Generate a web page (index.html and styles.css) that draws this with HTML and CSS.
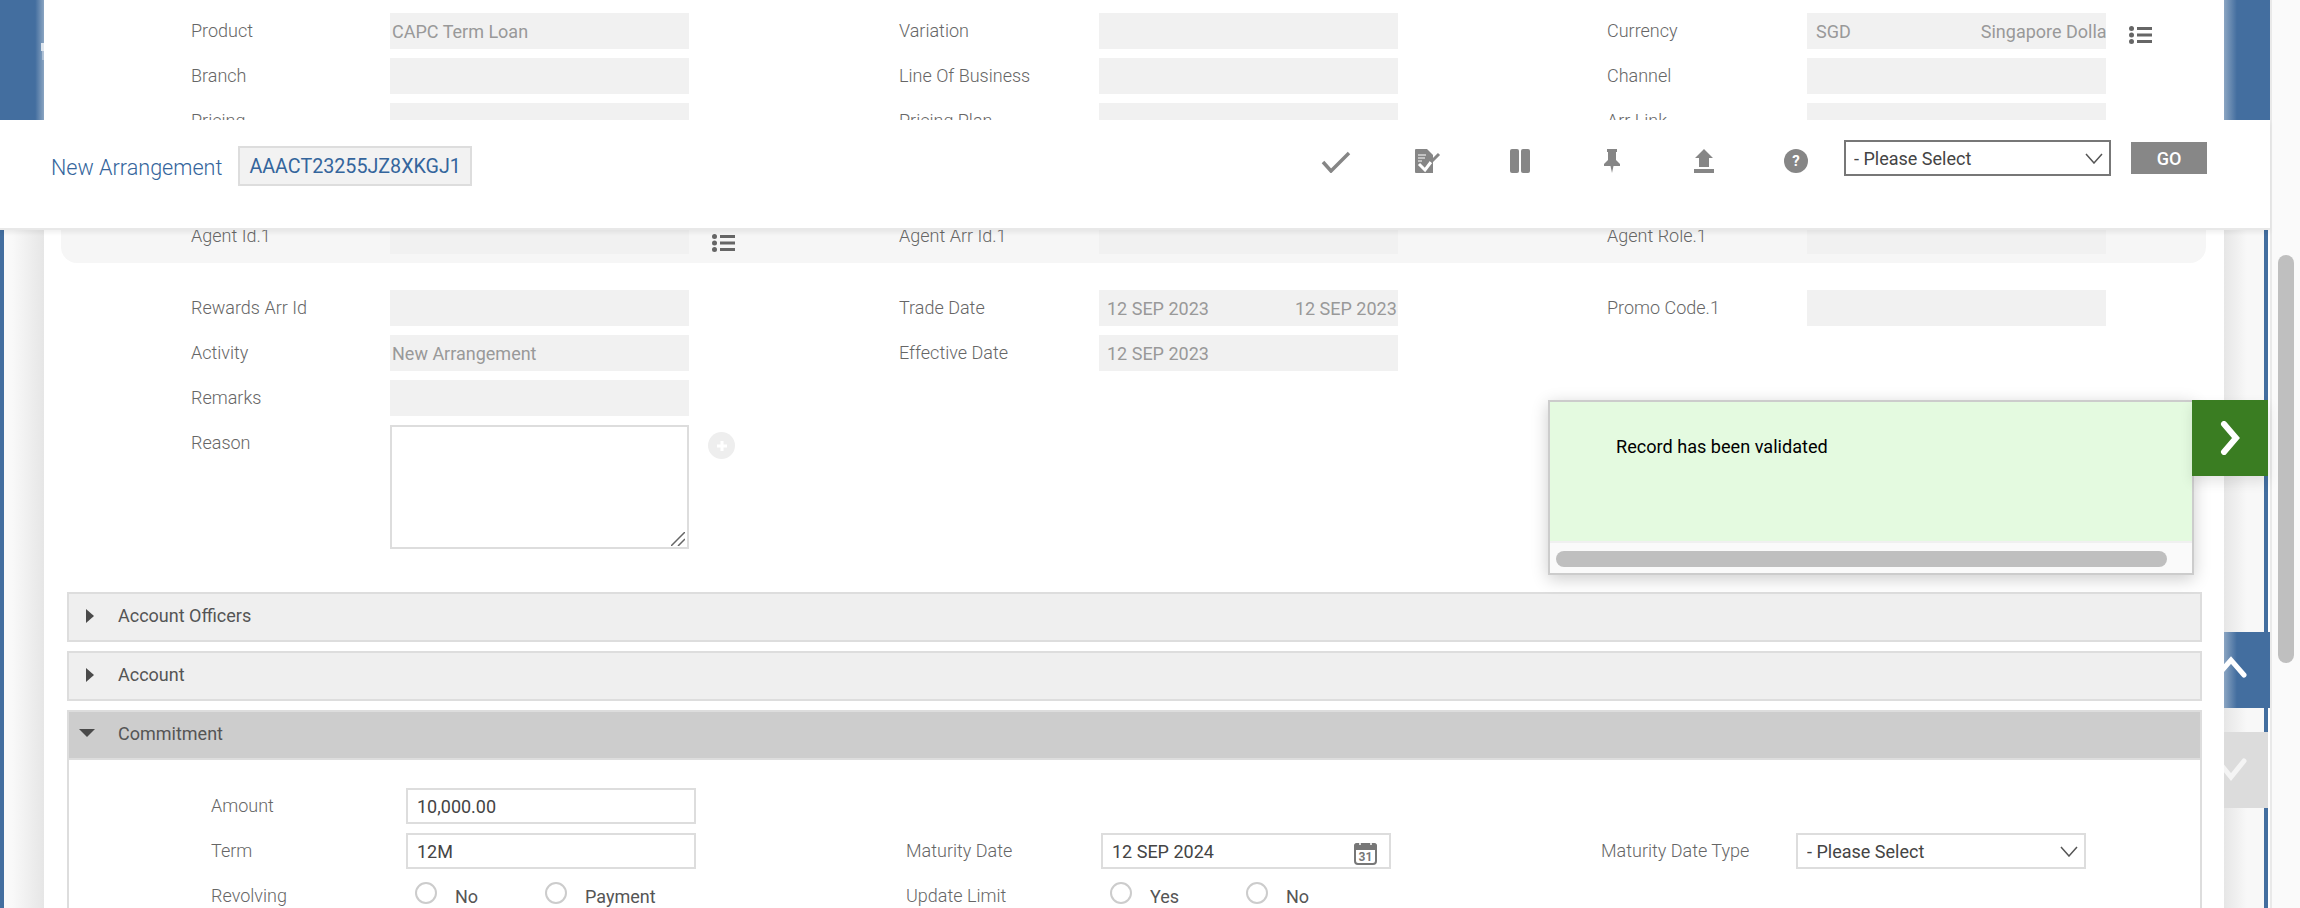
FILE: index.html
```html
<!DOCTYPE html>
<html lang="en">
<head>
    <meta charset="UTF-8">
    <title>New Arrangement</title>
    <link rel="stylesheet" href="styles.css">
</head>
<body>
    <div class="page">
        <!-- Left gutter -->
        <div class="gutter gutter-left">
            <div class="stub stub-left">
                <svg class="stub-arrow" width="3" height="17" viewBox="0 0 3 17"><rect width="3" height="8" fill="#fff" opacity="0.75"/><rect x="1" y="8" width="2" height="9" fill="#fff" opacity="0.35"/></svg>
            </div>
        </div>

        <div class="main">
            <div class="form-grid">
                <div class="field"><label>Product</label><div class="box tight">CAPC Term Loan</div></div>
                <div class="field"><label>Variation</label><div class="box"></div></div>
                <div class="field">
                    <label>Currency</label>
                    <div class="box split"><span>SGD</span><span class="second">Singapore Dollar</span></div>
                    <svg class="list-icon" width="23" height="18" viewBox="0 0 23 18"><use href="#list"/></svg>
                </div>
                <div class="field"><label>Branch</label><div class="box"></div></div>
                <div class="field"><label>Line Of Business</label><div class="box"></div></div>
                <div class="field"><label>Channel</label><div class="box"></div></div>
                <div class="field"><label>Pricing</label><div class="box"></div></div>
                <div class="field"><label>Pricing Plan</label><div class="box"></div></div>
                <div class="field"><label>Arr Link</label><div class="box"></div></div>
            </div>

            <div class="agent-panel">
                <div class="form-grid">
                    <div class="field">
                        <label>Agent Id.1</label><div class="box"></div>
                        <svg class="list-icon low" width="23" height="18" viewBox="0 0 23 18"><use href="#list"/></svg>
                    </div>
                    <div class="field"><label>Agent Arr Id.1</label><div class="box"></div></div>
                    <div class="field"><label>Agent Role.1</label><div class="box"></div></div>
                </div>
            </div>

            <div class="form-grid">
                <div class="field"><label>Rewards Arr Id</label><div class="box"></div></div>
                <div class="field">
                    <label>Trade Date</label>
                    <div class="box dates"><span>12 SEP 2023</span><span class="second">12 SEP 2023</span></div>
                </div>
                <div class="field"><label>Promo Code.1</label><div class="box"></div></div>
                <div class="field"><label>Activity</label><div class="box tight">New Arrangement</div></div>
                <div class="field"><label>Effective Date</label><div class="box">12 SEP 2023</div></div>
                <div class="field"></div>
                <div class="field"><label>Remarks</label><div class="box"></div></div>
                <div class="field"></div>
                <div class="field"></div>
                <div class="field field-tall">
                    <label>Reason</label>
                    <div class="reason-wrap">
                        <textarea class="reason"></textarea>
                        <svg class="grip" width="14" height="14" viewBox="0 0 14 14"><path d="M0 14L14 0M7 14l7-7" stroke="#666" stroke-width="1.500"/></svg>
                    </div>
                    <span class="add-btn">
                        <svg width="14" height="14" viewBox="0 0 14 14"><path d="M7 2v10M2 7h10" stroke="#fff" stroke-width="3"/></svg>
                    </span>
                </div>
            </div>

            <!-- Accordion sections -->
            <div class="section">
                <div class="section-head"><span class="tri-right"></span>Account Officers</div>
            </div>
            <div class="section">
                <div class="section-head"><span class="tri-right"></span>Account</div>
            </div>
            <div class="section open">
                <div class="section-head"><span class="tri-down"></span>Commitment</div>
                <div class="section-body">
                    <div class="inner-grid">
                        <div class="field"><label>Amount</label><input class="entry" type="text" value="10,000.00"></div>
                        <div class="field"></div>
                        <div class="field"></div>

                        <div class="field"><label>Term</label><input class="entry" type="text" value="12M"></div>
                        <div class="field">
                            <label>Maturity Date</label>
                            <div class="date-wrap">
                                <input class="entry" type="text" value="12 SEP 2024">
                                <svg class="cal-icon" width="23" height="24" viewBox="0 0 23 24">
                                    <path d="M3 2h17a3 3 0 0 1 3 3v4H0V5a3 3 0 0 1 3-3z" fill="#777"/>
                                    <rect x="1" y="3" width="21" height="20" rx="3" fill="none" stroke="#777" stroke-width="2"/>
                                    <path d="M6 0v4M17 0v4" stroke="#fff" stroke-width="1.500"/>
                                    <text x="11.500" y="20" text-anchor="middle" class="cal-text">31</text>
                                </svg>
                            </div>
                        </div>
                        <div class="field">
                            <label>Maturity Date Type</label>
                            <div class="select-wrap plain">
                                <select class="entry"><option>- Please Select</option></select>
                                <svg class="select-arrow" width="18" height="11" viewBox="0 0 18 11"><polyline points="1,1 9,10 17,1" fill="none" stroke="#555" stroke-width="1.500"/></svg>
                            </div>
                        </div>

                        <div class="field">
                            <label>Revolving</label>
                            <div class="radios">
                                <label class="radio"><input type="radio" name="rev">No</label>
                                <label class="radio"><input type="radio" name="rev">Payment</label>
                            </div>
                        </div>
                        <div class="field">
                            <label>Update Limit</label>
                            <div class="radios">
                                <label class="radio wide"><input type="radio" name="upd">Yes</label>
                                <label class="radio"><input type="radio" name="upd">No</label>
                            </div>
                        </div>
                        <div class="field"></div>
                    </div>
                </div>
            </div>
        </div>

        <!-- Right gutter -->
        <div class="gutter gutter-right">
            <div class="stub stub-right"></div>
            <div class="nav-btn nav-up">
                <svg width="46" height="76" viewBox="0 0 46 76"><polyline points="-6,43 7,28 20,43" fill="none" stroke="#fff" stroke-width="5" stroke-linecap="round"/></svg>
            </div>
            <div class="nav-btn nav-down">
                <svg width="46" height="76" viewBox="0 0 46 76"><polyline points="-6,29 7,45 20,29" fill="none" stroke="#f4f4f4" stroke-width="5" stroke-linecap="round"/></svg>
            </div>
        </div>

        <!-- Fixed action bar -->
        <div class="action-bar">
            <span class="page-title">New Arrangement</span>
            <span class="record-id">AAACT23255JZ8XKGJ1</span>
            <div class="tools">
                <span class="tool">
                    <svg width="30" height="24" viewBox="0 0 30 24"><polyline points="2,13 10,22 28,4" fill="none" stroke="#868686" stroke-width="3.500"/></svg>
                </span>
                <span class="tool">
                    <svg width="26" height="24" viewBox="0 0 26 24">
                        <path d="M1 0h11l6 6v18H1a1 1 0 0 1-1-1V1a1 1 0 0 1 1-1z" fill="#868686"/>
                        <path d="M3 6h8M3 9h7M3 12h4" stroke="#fff" stroke-width="1"/>
                        <polyline points="4,15 10,21 16,13" fill="none" stroke="#fff" stroke-width="3"/>
                        <path d="M16 13l8-8" stroke="#868686" stroke-width="3"/>
                    </svg>
                </span>
                <span class="tool">
                    <svg width="20" height="24" viewBox="0 0 20 24"><rect width="9" height="24" rx="2" fill="#868686"/><rect x="11" width="9" height="24" rx="2" fill="#868686"/></svg>
                </span>
                <span class="tool">
                    <svg width="16" height="24" viewBox="0 0 16 24"><path d="M3 0h10v3h-1v8l4 4v2H9.500L8 24l-1.500-7H0v-2l4-4V3H3z" fill="#868686"/></svg>
                </span>
                <span class="tool">
                    <svg width="20" height="24" viewBox="0 0 20 24"><path d="M10 0l9 9h-4v9H5V9H1z" fill="#868686"/><rect y="20" width="20" height="4" fill="#868686"/></svg>
                </span>
                <span class="tool"><span class="help">?</span></span>
            </div>
            <div class="select-wrap strong">
                <select class="bar-select"><option>- Please Select</option></select>
                <svg class="select-arrow" width="18" height="11" viewBox="0 0 18 11"><polyline points="1,1 9,10 17,1" fill="none" stroke="#555" stroke-width="1.500"/></svg>
            </div>
            <button class="go-btn">GO</button>
        </div>

        <!-- Message popup -->
        <div class="message">
            <div class="message-text">Record has been validated</div>
            <div class="message-track"><div class="message-thumb"></div></div>
            <div class="message-tab">
                <svg width="24" height="34" viewBox="0 0 24 34"><polyline points="6,3 18,17 6,31" fill="none" stroke="#fff" stroke-width="6" stroke-linecap="round"/></svg>
            </div>
        </div>
    </div>

    <div class="scrollbar"><div class="thumb"></div></div>

    <svg class="defs" width="0" height="0">
        <symbol id="list" viewBox="0 0 23 18">
            <circle cx="2.500" cy="2.500" r="2.500" fill="#666"/>
            <circle cx="2.500" cy="9" r="2.500" fill="#666"/>
            <circle cx="2.500" cy="15.500" r="2.500" fill="#666"/>
            <rect x="8" y="1" width="15" height="3" fill="#666"/>
            <rect x="8" y="7.500" width="15" height="3" fill="#666"/>
            <rect x="8" y="14" width="15" height="3" fill="#666"/>
        </symbol>
    </svg>
</body>
</html>
```

FILE: styles.css
```css
* {
    box-sizing: border-box;
}

body {
    margin: 0;
    height: 100vh;
    display: flex;
    overflow: hidden;
    background: #fff;
    font-family: 'Roboto', sans-serif;
    font-size: 18px;
    color: #666;
}

.page {
    position: relative;
    width: 2270px;
    height: 908px;
    display: flex;
    flex: none;
}

/* Gutters */
.gutter {
    flex: none;
    height: 100%;
}

.gutter-left {
    width: 44px;
    border-left: 4px solid #436e9f;
    background: linear-gradient(90deg, #f9f9f9 20%, #e6e6e6);
}

.gutter-right {
    width: 46px;
    position: relative;
    background: linear-gradient(90deg, #e6e6e6, #f8f8f8 50%, #f8f8f8 87%, #436e9f 87%, #436e9f 96%, #fff 96%);
}

.stub {
    height: 120px;
    background: #436e9f;
}

.stub-left {
    margin-left: -4px;
    width: 44px;
    background: linear-gradient(90deg, #436e9f 80%, #8ba5c2);
    display: flex;
    justify-content: flex-end;
}

.stub-arrow {
    margin-top: 43px;
}

.stub-right {
    background: linear-gradient(90deg, #8ba5c2, #436e9f 28%);
}

.nav-btn {
    position: absolute;
    left: 0;
    width: 46px;
    height: 76px;
    overflow: hidden;
}

.nav-up {
    top: 632px;
    background: linear-gradient(90deg, #8ba5c2, #436e9f 28%);
}

.nav-down {
    top: 732px;
    width: 44px;
    background: #dcdcdc;
}

/* Main column */
.main {
    width: 2180px;
    height: 100%;
    flex: none;
    padding-top: 13px;
    background: #fff;
    overflow: hidden;
}

.form-grid {
    display: grid;
    grid-template-columns: 709px 708px 500px;
    row-gap: 9px;
    padding-left: 146px;
}

.field {
    display: flex;
    align-items: center;
    min-height: 36px;
    font-weight: 300;
}

.field > label {
    width: 200px;
    flex: none;
    padding-bottom: 2px;
}

.form-grid .field:nth-child(3n+1) > label {
    padding-left: 1px;
}

.box {
    width: 299px;
    height: 36px;
    flex: none;
    padding: 0 8px;
    display: flex;
    align-items: center;
    background: #f1f1f1;
    color: #999;
    font-weight: 400;
    white-space: nowrap;
}

.box.tight {
    padding-left: 2px;
}

.split {
    padding-left: 9px;
    overflow: hidden;
}

.split .second {
    margin-left: 130px;
}

.dates .second {
    margin-left: 86px;
}

.list-icon {
    margin: 7px 0 0 23px;
    flex: none;
}

.list-icon.low {
    margin-top: 14px;
}

.agent-panel {
    margin: 21px 0 27px 17px;
    width: 2145px;
    padding: 58px 0 9px;
    background: #f6f6f6;
    border-radius: 0 0 16px 16px;
}

.agent-panel .form-grid {
    padding-left: 129px;
}

.field-tall {
    align-items: flex-start;
}

.field-tall > label {
    line-height: 36px;
}

.reason-wrap {
    position: relative;
    width: 299px;
    height: 124px;
    flex: none;
}

.reason {
    width: 100%;
    height: 100%;
    margin: 0;
    border: 2px solid #ddd;
    background: #fff;
    display: block;
    resize: none;
}

.grip {
    position: absolute;
    right: 4px;
    bottom: 3px;
}

.add-btn {
    width: 27px;
    height: 27px;
    margin: 7px 0 0 19px;
    flex: none;
    border-radius: 50%;
    background: #eee;
    display: flex;
    align-items: center;
    justify-content: center;
}

/* Accordion */
.section {
    margin: 9px 0 0 23px;
    width: 2135px;
}

.form-grid + .section {
    margin-top: 43px;
}

.section-head {
    height: 50px;
    padding: 0 0 3px 49px;
    display: flex;
    align-items: center;
    position: relative;
    border: 2px solid #ddd;
    background: #efefef;
    color: #555;
}

.tri-right {
    position: absolute;
    left: 17px;
    top: 15px;
    border-left: 8px solid #4a4a4a;
    border-top: 7px solid transparent;
    border-bottom: 7px solid transparent;
}

.tri-down {
    position: absolute;
    left: 10px;
    top: 17px;
    border-top: 8px solid #4a4a4a;
    border-left: 8px solid transparent;
    border-right: 8px solid transparent;
}

.open .section-head {
    background: #cdcdcd;
}

.section-body {
    border: 2px solid #ddd;
    border-top: 0;
    padding: 28px 0 40px 142px;
}

.inner-grid {
    display: grid;
    grid-template-columns: 695px 695px 500px;
    row-gap: 9px;
}

.inner-grid .field > label {
    width: 195px;
}

.entry {
    width: 290px;
    height: 36px;
    margin: 0;
    padding: 0 9px;
    border: 2px solid #ddd;
    border-radius: 0;
    background: #fff;
    color: #444;
    font: 400 18px 'Roboto', sans-serif;
    outline: none;
    appearance: none;
}

.date-wrap,
.select-wrap {
    position: relative;
    flex: none;
}

.date-wrap,
.select-wrap.plain {
    width: 290px;
    height: 36px;
}

.cal-icon {
    position: absolute;
    right: 14px;
    top: 8px;
}

.cal-text {
    font: 700 12px 'Roboto', sans-serif;
    fill: #777;
}

.select-arrow {
    position: absolute;
    right: 8px;
    top: 13px;
}

.radios {
    display: flex;
    align-items: center;
    padding-left: 9px;
}

.radio {
    display: flex;
    align-items: center;
    width: 130px;
    color: #555;
    font-weight: 400;
}

.radio.wide {
    width: 136px;
}

.radio input {
    appearance: none;
    width: 22px;
    height: 22px;
    margin: -6px 18px 0 0;
    border: 2px solid #ccc;
    border-radius: 50%;
    background: #fff;
}

/* Action bar */
.action-bar {
    position: absolute;
    left: 0;
    top: 120px;
    width: 2270px;
    height: 110px;
    padding: 0 63px 2px 51px;
    display: flex;
    align-items: center;
    background: #fff;
    border-bottom: 2px solid #e8e8e8;
    box-shadow: 0 3px 4px rgba(0, 0, 0, 0.06);
}

.page-title {
    margin-bottom: 12px;
    font-size: 21.600px;
    font-weight: 300;
    color: #34659c;
}

.record-id {
    height: 40px;
    margin: 0 0 14px 16px;
    padding: 0 9px;
    display: flex;
    align-items: center;
    border: 2px solid #ddd;
    background: #f2f2f2;
    color: #34659c;
    font-size: 19.700px;
}

.tools {
    margin: 0 2px 24px auto;
    display: flex;
}

.tool {
    width: 92px;
    display: flex;
    justify-content: center;
}

.help {
    width: 24px;
    height: 24px;
    border-radius: 50%;
    background: #868686;
    color: #fff;
    font-size: 15px;
    font-weight: 700;
    line-height: 24px;
    text-align: center;
}

.select-wrap.strong {
    width: 267px;
    height: 36px;
    margin-bottom: 30px;
}

.bar-select {
    width: 100%;
    height: 36px;
    padding: 0 8px;
    border: 2px solid #777;
    border-radius: 0;
    background: #fff;
    color: #444;
    font: 400 18px 'Roboto', sans-serif;
    appearance: none;
}

.go-btn {
    width: 76px;
    height: 32px;
    margin: 0 0 30px 20px;
    padding: 0;
    border: 0;
    background: #878787;
    color: #fff;
    font: 500 18px 'Roboto', sans-serif;
}

/* Message popup */
.message {
    position: absolute;
    left: 1548px;
    top: 400px;
    width: 646px;
    height: 175px;
    display: flex;
    flex-direction: column;
    border: 2px solid #ccc;
    background: #fafafa;
    box-shadow: 0 4px 16px rgba(0, 0, 0, 0.2);
}

.message-text {
    height: 141px;
    padding: 34px 0 0 66px;
    background: #e4fae0;
    border-bottom: 2px solid #f0f0f0;
    color: #000;
    font-size: 18.100px;
    line-height: 22px;
}

.message-track {
    padding: 8px 25px 0 6px;
}

.message-thumb {
    height: 16px;
    border-radius: 8px;
    background: #bfbfbf;
}

.message-tab {
    position: absolute;
    left: 642px;
    top: -2px;
    width: 76px;
    height: 76px;
    display: flex;
    align-items: center;
    justify-content: center;
    background: #3a7d22;
    box-shadow: 0 6px 12px rgba(0, 0, 0, 0.1);
}

/* Window scrollbar */
.scrollbar {
    width: 30px;
    height: 908px;
    flex: none;
    padding: 255px 4px 0 6px;
    border-left: 2px solid #e9e9e9;
    background: #fafafa;
}

.thumb {
    width: 16px;
    height: 408px;
    border-radius: 8px;
    background: #bfbfbf;
}

.defs {
    position: absolute;
}
```
